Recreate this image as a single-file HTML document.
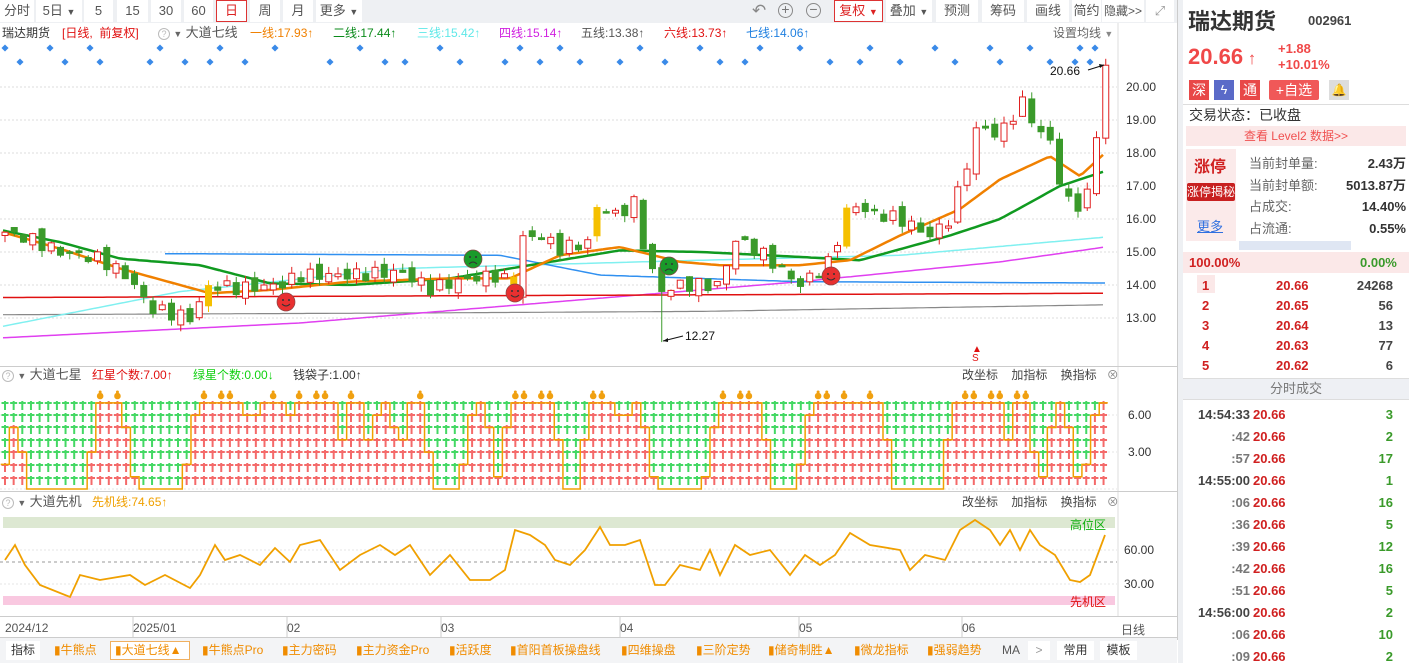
<!DOCTYPE html>
<html><head><meta charset="utf-8">
<style>
*{margin:0;padding:0;box-sizing:border-box}
body{width:1409px;height:663px;overflow:hidden;background:#fff;font-family:"Liberation Sans","Noto Sans CJK SC",sans-serif;font-size:12px;color:#333;position:relative}
.a{position:absolute;white-space:nowrap}
.tb{position:absolute;top:0;height:22px;background:#fff;color:#555;text-align:center;line-height:22px;font-size:13px;white-space:nowrap}
.bt{position:absolute;top:641px;height:19px;line-height:19px;font-size:12px;color:#f08c00;white-space:nowrap}
.lg{position:absolute;top:25px;line-height:16px;font-size:12px;white-space:nowrap}
</style></head><body>
<!-- toolbar -->
<div class="a" style="left:0;top:0;width:1177px;height:23px;background:#eef0f3"></div>
<div class="tb" style="left:0;width:34px">分时</div>
<div class="tb" style="left:36px;width:46px">5日 <span style="font-size:9px">▼</span></div>
<div class="tb" style="left:84px;width:29px">5</div>
<div class="tb" style="left:117px;width:31px">15</div>
<div class="tb" style="left:151px;width:30px">30</div>
<div class="tb" style="left:184px;width:29px">60</div>
<div class="tb" style="left:216px;width:31px;border:1px solid #d33;color:#d22;line-height:20px">日</div>
<div class="tb" style="left:250px;width:30px">周</div>
<div class="tb" style="left:283px;width:30px">月</div>
<div class="tb" style="left:316px;width:46px">更多 <span style="font-size:9px">▼</span></div>
<div class="a" style="left:752px;top:0;font-size:17px;color:#888;line-height:22px">↶</div>
<div class="a" style="left:778px;top:3px;width:15px;height:15px;border:1.5px solid #888;border-radius:50%;text-align:center;line-height:11px;color:#777;font-size:14px">+</div>
<div class="a" style="left:806px;top:3px;width:15px;height:15px;border:1.5px solid #888;border-radius:50%;text-align:center;line-height:11px;color:#777;font-size:14px">−</div>
<div class="tb" style="left:834px;width:49px;border:1px solid #d33;color:#d22;line-height:20px">复权 <span style="font-size:9px">▼</span></div>
<div class="tb" style="left:886px;width:46px">叠加 <span style="font-size:9px">▼</span></div>
<div class="tb" style="left:936px;width:42px">预测</div>
<div class="tb" style="left:982px;width:42px">筹码</div>
<div class="tb" style="left:1027px;width:42px">画线</div>
<div class="tb" style="left:1072px;width:29px">简约</div>
<div class="tb" style="left:1102px;width:42px;font-size:12px">隐藏&gt;&gt;</div>
<div class="tb" style="left:1146px;width:28px;color:#999">⤢</div>
<!-- legend -->
<div class="lg" style="left:2px">瑞达期货</div>
<div class="lg" style="left:62px;color:#e01010">[日线,&nbsp;&nbsp;前复权]</div>
<div class="lg" style="left:158px"><span style="display:inline-block;width:12px;height:12px;border:1px solid #bbb;border-radius:50%;font-size:9px;text-align:center;line-height:10px;color:#bbb">?</span> <span style="color:#666;font-size:9px">▼</span> <span style="color:#555;font-size:13px">大道七线</span></div>
<div class="lg" style="left:250px;color:#f08000">一线:17.93↑</div>
<div class="lg" style="left:333px;color:#0a8a1a">二线:17.44↑</div>
<div class="lg" style="left:417px;color:#60e8e8">三线:15.42↑</div>
<div class="lg" style="left:499px;color:#d020e0">四线:15.14↑</div>
<div class="lg" style="left:581px;color:#555">五线:13.38↑</div>
<div class="lg" style="left:664px;color:#e01010">六线:13.73↑</div>
<div class="lg" style="left:746px;color:#2080e0">七线:14.06↑</div>
<div class="lg" style="left:1053px;color:#666">设置均线 <span style="font-size:9px;color:#888">▼</span></div>

<svg class="a" style="left:0;top:0" width="1180" height="640" id="sv">
<line x1="1118" y1="23" x2="1118" y2="616" stroke="#ddd"/>
<line x1="1177.5" y1="0" x2="1177.5" y2="663" stroke="#ccc"/>
<line x1="0" y1="366.5" x2="1177" y2="366.5" stroke="#ccc"/>
<line x1="0" y1="491.5" x2="1177" y2="491.5" stroke="#ccc"/>
<line x1="0" y1="616.5" x2="1177" y2="616.5" stroke="#ccc"/>
<line x1="0" y1="637.5" x2="1177" y2="637.5" stroke="#ccc"/>
<rect x="3" y="517" width="1112" height="11" fill="#dde8d2"/>
<rect x="3" y="596" width="1112" height="9" fill="#f9c8e0"/>
<line x1="0" y1="562" x2="1117" y2="562" stroke="#999" stroke-dasharray="3,3"/>
<g id="g"></g>
</svg>

<!-- sub panel headers -->
<div class="a" style="left:2px;top:367px;line-height:16px"><span style="display:inline-block;width:12px;height:12px;border:1px solid #bbb;border-radius:50%;font-size:9px;text-align:center;line-height:10px;color:#bbb">?</span> <span style="color:#666;font-size:9px">▼</span> <span style="color:#555;font-size:13px">大道七星</span></div>
<div class="a" style="left:92px;top:367px;line-height:16px;color:#e01010">红星个数:7.00↑</div>
<div class="a" style="left:193px;top:367px;line-height:16px;color:#10d010">绿星个数:0.00↓</div>
<div class="a" style="left:293px;top:367px;line-height:16px;color:#333">钱袋子:1.00↑</div>
<div class="a" style="left:962px;top:367px;line-height:16px;color:#444">改坐标&nbsp;&nbsp;&nbsp;&nbsp;加指标&nbsp;&nbsp;&nbsp;&nbsp;换指标&nbsp;&nbsp;&nbsp;<span style="color:#888">⊗</span></div>
<div class="a" style="left:2px;top:494px;line-height:16px"><span style="display:inline-block;width:12px;height:12px;border:1px solid #bbb;border-radius:50%;font-size:9px;text-align:center;line-height:10px;color:#bbb">?</span> <span style="color:#666;font-size:9px">▼</span> <span style="color:#555;font-size:13px">大道先机</span></div>
<div class="a" style="left:92px;top:494px;line-height:16px;color:#f0a000">先机线:74.65↑</div>
<div class="a" style="left:962px;top:494px;line-height:16px;color:#444">改坐标&nbsp;&nbsp;&nbsp;&nbsp;加指标&nbsp;&nbsp;&nbsp;&nbsp;换指标&nbsp;&nbsp;&nbsp;<span style="color:#888">⊗</span></div>
<div class="a" style="left:1070px;top:516px;color:#10b010">高位区</div>
<div class="a" style="left:1070px;top:593px;color:#e01010">先机区</div>
<!-- axis labels -->
<div class="a" style="left:1126px;top:80px">20.00</div>
<div class="a" style="left:1126px;top:113px">19.00</div>
<div class="a" style="left:1126px;top:146px">18.00</div>
<div class="a" style="left:1126px;top:179px">17.00</div>
<div class="a" style="left:1126px;top:212px">16.00</div>
<div class="a" style="left:1126px;top:245px">15.00</div>
<div class="a" style="left:1126px;top:278px">14.00</div>
<div class="a" style="left:1126px;top:311px">13.00</div>
<div class="a" style="left:1128px;top:408px">6.00</div>
<div class="a" style="left:1128px;top:445px">3.00</div>
<div class="a" style="left:1124px;top:543px">60.00</div>
<div class="a" style="left:1124px;top:577px">30.00</div>
<div class="a" style="left:1050px;top:64px;color:#111">20.66</div>
<div class="a" style="left:685px;top:329px;color:#111">12.27</div>
<div class="a" style="left:972px;top:345px;color:#e01010;font-size:10px;line-height:9px">▲<br>S</div>
<!-- dates -->
<div class="a" style="left:5px;top:621px;color:#555">2024/12</div>
<div class="a" style="left:133px;top:621px;color:#555">2025/01</div>
<div class="a" style="left:287px;top:621px;color:#555">02</div>
<div class="a" style="left:441px;top:621px;color:#555">03</div>
<div class="a" style="left:620px;top:621px;color:#555">04</div>
<div class="a" style="left:799px;top:621px;color:#555">05</div>
<div class="a" style="left:962px;top:621px;color:#555">06</div>
<div class="a" style="left:1121px;top:621px;color:#555">日线</div>
<!-- bottom tabs -->
<div class="a" style="left:0;top:638px;width:1177px;height:25px;background:#f3f4f6"></div>
<div class="bt" style="left:6px;width:34px;background:#fff;color:#333;text-align:center">指标</div>
<div class="bt" style="left:54px">▮牛熊点</div>
<div class="bt" style="left:110px;width:80px;background:#fff;border:1px solid #f0b060;line-height:17px;padding-left:4px">▮大道七线▲</div>
<div class="bt" style="left:202px">▮牛熊点Pro</div>
<div class="bt" style="left:282px">▮主力密码</div>
<div class="bt" style="left:356px">▮主力资金Pro</div>
<div class="bt" style="left:449px">▮活跃度</div>
<div class="bt" style="left:510px">▮首阳首板操盘线</div>
<div class="bt" style="left:621px">▮四维操盘</div>
<div class="bt" style="left:696px">▮三阶定势</div>
<div class="bt" style="left:768px">▮储奇制胜▲</div>
<div class="bt" style="left:854px">▮微龙指标</div>
<div class="bt" style="left:927px">▮强弱趋势</div>
<div class="bt" style="left:1002px;color:#555">MA</div>
<div class="bt" style="left:1028px;width:22px;background:#fff;color:#999;text-align:center">&gt;</div>
<div class="bt" style="left:1057px;width:37px;background:#fff;color:#333;text-align:center">常用</div>
<div class="bt" style="left:1100px;width:37px;background:#fff;color:#333;text-align:center">模板</div>

<!-- right panel -->
<div class="a" style="left:1178px;top:0;width:5px;height:663px;background:#eef0f3"></div>
<div class="a" style="left:1188px;top:8px;font-size:22px;font-weight:bold;color:#333;line-height:28px">瑞达期货</div>
<div class="a" style="left:1308px;top:13px;font-size:13px;font-weight:bold;color:#444">002961</div>
<div class="a" style="left:1188px;top:43px;font-size:22px;font-weight:bold;color:#f04848;line-height:28px">20.66<span style="font-size:17px"> ↑</span></div>
<div class="a" style="left:1278px;top:41px;font-size:13px;font-weight:bold;color:#f04848;line-height:16px">+1.88<br>+10.01%</div>
<div class="a" style="left:1189px;top:80px;width:20px;height:20px;background:#e84848;color:#fff;font-size:14px;text-align:center;line-height:20px">深</div>
<div class="a" style="left:1214px;top:80px;width:20px;height:20px;background:#5a6ac8;color:#fff;font-size:13px;text-align:center;line-height:20px">ϟ</div>
<div class="a" style="left:1240px;top:80px;width:20px;height:20px;background:#e84848;color:#fff;font-size:14px;text-align:center;line-height:20px">通</div>
<div class="a" style="left:1269px;top:80px;width:50px;height:20px;background:#f05858;color:#fff;font-size:14px;text-align:center;line-height:20px;border-radius:2px">+自选</div>
<div class="a" style="left:1329px;top:80px;width:20px;height:20px;background:#ddd;color:#999;font-size:12px;text-align:center;line-height:20px">🔔</div>
<div class="a" style="left:1183px;top:104px;width:226px;height:1px;background:#ddd"></div>
<div class="a" style="left:1189px;top:106px;font-size:14px;color:#333;line-height:18px">交易状态：已收盘</div>
<div class="a" style="left:1186px;top:126px;width:220px;height:20px;background:#fbe8e8;color:#f05050;text-align:center;line-height:20px;font-size:12px">查看 Level2 数据&gt;&gt;</div>
<div class="a" style="left:1186px;top:149px;width:50px;height:92px;background:#fbeaea"></div>
<div class="a" style="left:1194px;top:153px;font-size:16px;font-weight:bold;color:#d02020">涨停</div>
<div class="a" style="left:1187px;top:183px;width:48px;height:18px;background:#c82020;color:#fff;font-size:12px;text-align:center;line-height:18px;border-radius:2px">涨停揭秘</div>
<div class="a" style="left:1197px;top:216px;color:#3070e0;text-decoration:underline;font-size:13px">更多</div>
<div class="a" style="left:1249px;top:153px;font-size:13px;color:#666;line-height:21.5px">当前封单量:<br>当前封单额:<br>占成交:<br>占流通:</div>
<div class="a" style="left:1290px;top:153px;width:116px;text-align:right;font-size:13px;font-weight:bold;color:#333;line-height:21.5px">2.43万<br>5013.87万<br>14.40%<br>0.55%</div>
<div class="a" style="left:1239px;top:241px;width:112px;height:9px;background:#dfe6f3"></div>
<div class="a" style="left:1183px;top:252px;width:226px;height:21px;background:#fbe8e8"></div>
<div class="a" style="left:1189px;top:255px;font-size:13px;font-weight:bold;color:#d02020">100.00%</div>
<div class="a" style="left:1360px;top:255px;font-size:13px;font-weight:bold;color:#3a9a2a">0.00%</div>
<div class="a" style="left:1197px;top:275px;width:18px;height:18px;background:#fbe8e8"></div>
<div class="a" style="left:1202px;top:276px;font-size:13px;font-weight:bold;color:#d02020;line-height:20px">1<br>2<br>3<br>4<br>5</div>
<div class="a" style="left:1276px;top:276px;font-size:13px;font-weight:bold;color:#d02020;line-height:20px">20.66<br>20.65<br>20.64<br>20.63<br>20.62</div>
<div class="a" style="left:1330px;top:276px;width:63px;text-align:right;font-size:13px;font-weight:bold;color:#444;line-height:20px">24268<br>56<br>13<br>77<br>6</div>
<div class="a" style="left:1183px;top:378px;width:226px;height:22px;background:#eef0f4;border-top:1px solid #ddd;border-bottom:1px solid #ddd;text-align:center;line-height:20px;color:#777;font-size:13px">分时成交</div>
<div class="a" style="left:1186px;top:404px;width:64px;text-align:right;font-size:13px;font-weight:bold;color:#444;line-height:22px">14:54:33<br><span style="color:#777">:42</span><br><span style="color:#777">:57</span><br>14:55:00<br><span style="color:#777">:06</span><br><span style="color:#777">:36</span><br><span style="color:#777">:39</span><br><span style="color:#777">:42</span><br><span style="color:#777">:51</span><br>14:56:00<br><span style="color:#777">:06</span><br><span style="color:#777">:09</span></div>
<div class="a" style="left:1253px;top:404px;font-size:13px;font-weight:bold;color:#d02020;line-height:22px">20.66<br>20.66<br>20.66<br>20.66<br>20.66<br>20.66<br>20.66<br>20.66<br>20.66<br>20.66<br>20.66<br>20.66</div>
<div class="a" style="left:1350px;top:404px;width:43px;text-align:right;font-size:13px;font-weight:bold;color:#3a9a2a;line-height:22px">3<br>2<br>17<br>1<br>16<br>5<br>12<br>16<br>5<br>2<br>10<br>2</div>

<script>
var G=document.getElementById("g"),h="";
function P(p){return 87+(20-p)*33}
function it(k,x){for(var i=0;i<k.length-1;i++){if(x<=k[i+1][0]){var t=(x-k[i][0])/(k[i+1][0]-k[i][0]);return k[i][1]+t*(k[i+1][1]-k[i][1]);}}return k[k.length-1][1];}
[20,19,18,17,16,15,14,13].forEach(function(p){h+='<line x1="0" x2="1117" y1="'+P(p)+'" y2="'+P(p)+'" stroke="#ddd" stroke-dasharray="2,2"/>';});
[415,452,489].forEach(function(y){h+='<line x1="0" x2="1117" y1="'+y+'" y2="'+y+'" stroke="#e6e6e6" stroke-dasharray="2,2"/>';});
[550,584].forEach(function(y){h+='<line x1="0" x2="1117" y1="'+y+'" y2="'+y+'" stroke="#e6e6e6" stroke-dasharray="2,2"/>';});
[133,287,441,620,799,962].forEach(function(x){h+='<line x1="'+x+'" x2="'+x+'" y1="617" y2="637" stroke="#ccc"/>';});
function pl(k,c,w){var s="";for(var x=k[0][0];x<=k[k.length-1][0];x+=4){s+=x+","+P(it(k,x)).toFixed(1)+" ";}h+='<polyline points="'+s+'" fill="none" stroke="'+c+'" stroke-width="'+w+'"/>';}
pl([[3,13.1],[400,13.15],[700,13.2],[1105,13.4]],"#888",1.2);
pl([[3,12.4],[300,12.85],[600,13.6],[800,14.1],[1000,14.7],[1105,15.15]],"#e040f0",1.5);
pl([[3,12.75],[180,13.8],[400,14.5],[700,14.75],[900,14.9],[1105,15.45]],"#80f0f0",1.5);
pl([[3,13.62],[1105,13.75]],"#e01010",1.5);
pl([[165,14.95],[500,14.9],[600,14.3],[800,14.1],[1105,14.06]],"#3090f0",1.5);
pl([[3,15.65],[60,15.3],[120,14.8],[200,14.6],[270,14.05],[350,14.0],[450,14.2],[520,14.55],[620,15.05],[700,15.0],[800,14.85],[860,14.75],[950,15.5],[1000,16.0],[1060,17.0],[1105,17.45]],"#109a20",2.5);
pl([[3,15.6],[60,15.1],[120,14.5],[180,14.0],[210,13.75],[270,13.85],[350,14.1],[450,14.2],[510,14.2],[560,14.9],[620,15.15],[680,14.7],[720,14.6],[800,14.6],[850,14.75],[900,15.5],[960,16.3],[1000,17.2],[1050,17.9],[1080,17.3],[1105,18.0]],"#f08000",2.5);
var K=[[5,15.6],[30,15.4],[60,15.0],[100,14.8],[130,14.2],[150,13.3],[190,13.0],[210,14.0],[240,13.9],[280,14.0],[300,14.3],[350,14.3],[400,14.4],[430,13.9],[470,14.2],[500,14.3],[515,13.8],[520,15.4],[540,15.5],[560,15.1],[590,15.3],[600,16.8],[610,16.0],[635,16.5],[645,15.0],[660,13.8],[680,14.0],[700,14.0],[720,14.0],[735,15.4],[760,15.0],[800,14.0],[830,14.7],[850,16.5],[870,16.2],[900,16.0],[930,15.5],[950,16.0],[965,17.5],[980,19.0],[995,18.5],[1010,19.0],[1025,19.6],[1040,18.5],[1050,18.5],[1060,17.0],[1075,16.3],[1090,16.8],[1097,18.8],[1105,20.66]];
var prev=15.5;
for(var i=0;i<120;i++){var x=5+i*9.25;var c=it(K,x)+Math.sin(i*2.7)*0.2;if(i==119)c=20.66;var o=prev+Math.sin(i*1.9)*0.15;var hi=Math.max(o,c)+Math.abs(Math.sin(i*3.1))*0.2,lo=Math.min(o,c)-Math.abs(Math.cos(i*2.3))*0.2;if(Math.abs(x-660)<5)lo=12.27;
var up=c>=o,yel=[22,55,64,91].indexOf(i)>=0;var col=yel?"#f5c000":(up?"#e02020":"#3a9a2a");
h+='<line x1="'+x+'" x2="'+x+'" y1="'+P(hi)+'" y2="'+P(lo)+'" stroke="'+col+'"/>';
var yt=P(Math.max(o,c)),hh=Math.max(1.5,Math.abs(o-c)*33);
h+='<rect x="'+(x-3)+'" y="'+yt+'" width="6" height="'+hh+'" fill="'+(up&&!yel?"#fff":col)+'" stroke="'+col+'"/>';prev=c;}
function sm(x,y,c,happy){h+='<circle cx="'+x+'" cy="'+y+'" r="9" fill="'+c+'" stroke="#844" stroke-width=".7"/><circle cx="'+(x-3)+'" cy="'+(y-2)+'" r="1" fill="#333"/><circle cx="'+(x+3)+'" cy="'+(y-2)+'" r="1" fill="#333"/>'+(happy?'<path d="M'+(x-4)+' '+(y+2)+'Q'+x+' '+(y+6)+' '+(x+4)+' '+(y+2)+'" fill="none" stroke="#333"/>':'<path d="M'+(x-4)+' '+(y+5)+'Q'+x+' '+(y+1)+' '+(x+4)+' '+(y+5)+'" fill="none" stroke="#333"/>');}
sm(286,302,"#e83030",1);sm(515,293,"#e83030",1);sm(831,276,"#e83030",1);sm(473,259,"#1a9a2a",0);sm(669,266,"#1a9a2a",0);
[5,50,90,160,220,275,360,440,520,560,640,700,760,800,870,935,990,1030,1080,1095].forEach(function(x){h+='<rect x="'+(x-2.5)+'" y="45.5" width="5" height="5" transform="rotate(45 '+x+' 48)" fill="#3a8ae8"/>';});
[20,65,100,150,185,210,245,330,385,405,460,505,540,580,620,665,720,745,830,860,900,955,1000,1050,1075,1090].forEach(function(x){h+='<rect x="'+(x-2.5)+'" y="59.5" width="5" height="5" transform="rotate(45 '+x+' 62)" fill="#3a8ae8"/>';});
h+='<line x1="1088" y1="70" x2="1104" y2="65" stroke="#111"/><path d="M1104 65l-5 -1l1 4z" fill="#111"/>';
h+='<line x1="683" y1="336" x2="663" y2="341" stroke="#111"/><path d="M663 341l5 -3l0 4z" fill="#111"/>';
var R=[[100,122],[197,245],[258,282],[292,335],[352,362],[380,390],[410,420],[475,485],[512,553],[592,617],[630,640],[718,760],[812,822],[826,880],[955,1002],[1015,1025],[1055,1065],[1098,1108]];
var rows=[405,417,429,442,454,467,480],ln="";
for(var j=0;j<128;j++){var x=5+j*8.65,d=99;R.forEach(function(r){var dd=x<r[0]?(r[0]-x):(x>r[1]?x-r[1]:0);d=Math.min(d,dd/8.65);});var k=Math.max(0,Math.round(7-4*d));if(j<3)k=[2,5,3][j];
for(var r=0;r<7;r++){var red=(6-r)<k;var cl=red?"#f46a6a":"#44d864";h+='<path d="M'+(x-3.5)+' '+(rows[r]-2)+'h7M'+x+' '+(rows[r]-4)+'v9" stroke="'+cl+'" stroke-width="2"/>';}
if(k==7&&Math.sin(j*4.1)>-0.3)h+='<circle cx="'+x+'" cy="396" r="3.3" fill="#f0a010"/><circle cx="'+x+'" cy="392" r="1.5" fill="#f0a010"/>';
var yy=489-k*12.3;ln+=(x-4.3)+","+yy+" "+(x+4.3)+","+yy+" ";}
h+='<polyline points="'+ln+'" fill="none" stroke="#f0a000" stroke-width="1.5"/>';
var O="5:560 15:545 25:565 40:585 70:597 80:575 100:580 130:575 145:585 165:575 190:588 200:575 215:545 225:560 240:555 260:565 275:548 290:562 300:545 320:540 340:570 360:555 380:545 395:555 410:545 430:575 450:555 470:580 490:580 505:570 515:530 530:535 545:545 555:560 570:565 585:550 600:527 610:545 625:545 640:540 655:585 665:585 680:565 700:570 710:550 720:575 735:545 750:555 770:550 790:575 805:555 820:565 835:555 850:533 870:545 900:550 910:570 925:555 945:560 960:530 975:520 990:530 1000:545 1010:530 1020:550 1030:530 1040:545 1055:555 1070:580 1080:582 1090:575 1105:535".replace(/:/g,",");
h+='<polyline points="'+O+'" fill="none" stroke="#f0a000" stroke-width="1.8"/>';
G.innerHTML=h;
</script>
</body></html>
